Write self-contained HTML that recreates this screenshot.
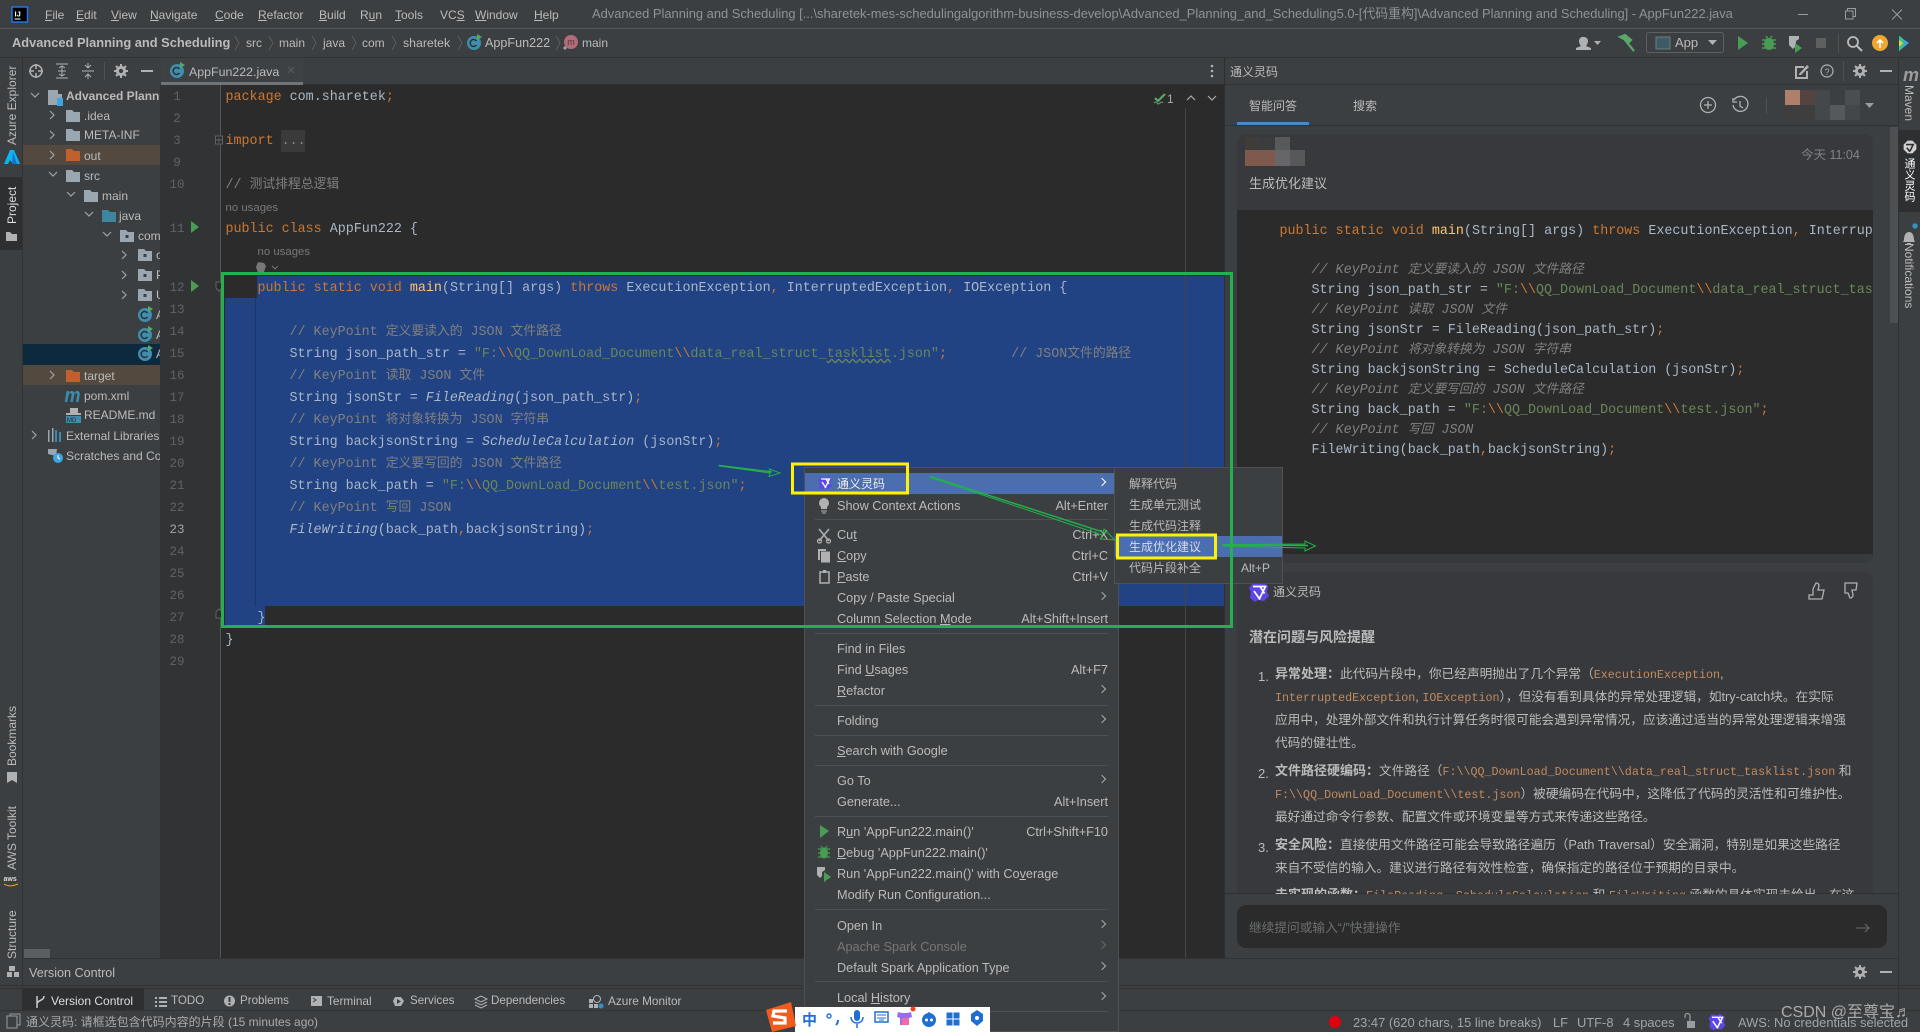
<!DOCTYPE html>
<html><head><meta charset="utf-8"><title>AppFun222.java</title>
<style>
html{background:#3c3f41}
html,body{margin:0;padding:0;width:1920px;height:1032px;overflow:hidden}
body{position:relative;background:#3c3f41;font-family:"Liberation Sans","Noto Sans CJK SC",sans-serif;font-size:12px;color:#bbb;filter:blur(.35px)}
.a{position:absolute}
.t{position:absolute;white-space:nowrap;line-height:20px;height:20px}
.c{position:absolute;white-space:pre;font-family:"Liberation Mono","Noto Sans CJK SC",monospace;font-size:13.36px;line-height:22px;height:22px;color:#a9b7c6}
.k{color:#cc7832}.g{color:#808080}.s{color:#6a8759}.m{color:#ffc66d}.i{font-style:italic}
.z{font-size:12.8px;font-family:"Noto Sans CJK SC",sans-serif;line-height:0}
.n{position:absolute;left:166px;width:22px;text-align:center;font-family:"Liberation Mono",monospace;font-size:12.5px;line-height:22px;color:#606366;height:22px}
.v{position:absolute;writing-mode:vertical-rl;transform:rotate(180deg);white-space:nowrap;font-size:12px;line-height:22px;width:22px;left:1px;text-align:center;color:#bbb}
.vr{position:absolute;writing-mode:vertical-rl;white-space:nowrap;font-size:12px;line-height:22px;width:22px;left:1898px;text-align:center;color:#bbb}
.r{position:absolute;left:805px;width:314px;height:21px;line-height:21px;color:#bbb;font-size:12.7px}
.r b{font-weight:normal;position:absolute;left:32px;top:.5px;white-space:nowrap}
.r i{font-style:normal;position:absolute;right:11px;top:.5px;white-space:nowrap}
.sp{position:absolute;left:815px;width:293px;height:1px;background:#515151}
.ar{position:absolute;right:14px;top:6px;width:5px;height:5px;border-top:1.4px solid #aaa;border-right:1.4px solid #aaa;transform:rotate(45deg)}
.sb{position:absolute;left:1114px;width:168px;height:21px;line-height:21px;color:#bbb;font-size:12px}
.sb b{font-weight:normal;position:absolute;left:15px;top:.5px;white-space:nowrap}
.p{position:absolute;left:1275px;white-space:nowrap;font-size:12.7px;line-height:23px;height:23px;color:#bbb}
.p u{text-decoration:none;font-family:"Liberation Mono",monospace;font-size:11.7px;line-height:0;color:#c38b5f}
.p b{font-weight:bold;font-size:13px;line-height:0}
.pn{position:absolute;left:1258px;font-size:13px;line-height:23px;color:#bbb}
.st{position:absolute;white-space:nowrap;line-height:21px;top:1012px;font-size:12.9px;color:#a0a5a8}
</style></head><body>

<!-- panels -->
<div class="a" style="left:0;top:28px;width:1920px;height:1px;background:#55585a"></div>
<div class="a" style="left:0;top:57px;width:1920px;height:1px;background:#323232"></div>
<div class="a" style="left:22px;top:58px;width:1px;height:930px;background:#323232"></div>
<div class="a" style="left:160px;top:58px;width:1064px;height:26px;background:#3c3f41"></div>
<div class="a" style="left:160px;top:84px;width:60px;height:874px;background:#313335"></div>
<div class="a" style="left:220px;top:84px;width:1004px;height:874px;background:#2b2b2b;border-left:1px solid #555;box-sizing:border-box"></div>
<div class="a" style="left:160px;top:84px;width:1064px;height:1px;background:#323232"></div>
<div class="a" style="left:161px;top:58px;width:142px;height:24px;background:#3e4144"></div>
<div class="a" style="left:161px;top:82px;width:142px;height:3px;background:#6e7478"></div>
<div class="a" style="left:1224px;top:58px;width:1px;height:900px;background:#2d2f30"></div>
<div class="a" style="left:1898px;top:58px;width:1px;height:953px;background:#323232"></div>
<div class="a" style="left:0;top:177px;width:22px;height:73px;background:#2d2f30"></div>
<div class="a" style="left:1899px;top:130px;width:21px;height:82px;background:#2d2f30"></div>

<!-- tree row highlights -->
<div class="a" style="left:23px;top:145px;width:137px;height:20px;background:#53493e"></div>
<div class="a" style="left:23px;top:344px;width:137px;height:21px;background:#0d293e"></div>
<div class="a" style="left:23px;top:365px;width:137px;height:20px;background:#53493e"></div>
<div class="a" style="left:24px;top:949px;width:26px;height:9px;background:#5c5f61"></div>

<!-- menu bar -->
<div class="t" style="left:45px;top:5px;color:#bbb"><u>F</u>ile</div>
<div class="t" style="left:76px;top:5px"><u>E</u>dit</div>
<div class="t" style="left:111px;top:5px"><u>V</u>iew</div>
<div class="t" style="left:150px;top:5px"><u>N</u>avigate</div>
<div class="t" style="left:215px;top:5px"><u>C</u>ode</div>
<div class="t" style="left:258px;top:5px"><u>R</u>efactor</div>
<div class="t" style="left:319px;top:5px"><u>B</u>uild</div>
<div class="t" style="left:360px;top:5px">R<u>u</u>n</div>
<div class="t" style="left:395px;top:5px"><u>T</u>ools</div>
<div class="t" style="left:440px;top:5px">VC<u>S</u></div>
<div class="t" style="left:475px;top:5px"><u>W</u>indow</div>
<div class="t" style="left:534px;top:5px"><u>H</u>elp</div>
<div class="t" style="left:592px;top:4px;color:#8f9396;font-size:12.9px;width:1145px;overflow:hidden">Advanced Planning and Scheduling [...\sharetek-mes-schedulingalgorithm-business-develop\Advanced_Planning_and_Scheduling5.0-[代码重构]\Advanced Planning and Scheduling] - AppFun222.java</div>

<!-- nav bar -->
<div class="t" style="left:12px;top:33px;font-weight:bold;font-size:12.85px">Advanced Planning and Scheduling</div>
<div class="t" style="left:246px;top:33px">src</div>
<div class="t" style="left:279px;top:33px">main</div>
<div class="t" style="left:323px;top:33px">java</div>
<div class="t" style="left:362px;top:33px">com</div>
<div class="t" style="left:403px;top:33px;font-size:12.3px">sharetek</div>
<div class="t" style="left:485px;top:33px;font-size:12.6px">AppFun222</div>
<div class="t" style="left:582px;top:33px">main</div>
<div class="a" style="left:1646px;top:32px;width:78px;height:21px;border:1px solid #5e6060;border-radius:3px;box-sizing:border-box"></div>
<div class="t" style="left:1675px;top:33px;font-size:13px">App</div>

<!-- tab -->
<div class="t" style="left:189px;top:62px;font-size:12.4px">AppFun222.java</div>

<!-- tree -->
<div class="a" style="left:23px;top:85px;width:137px;height:400px;overflow:hidden">
<div class="t" style="left:43px;top:1px;font-weight:bold">Advanced Planning</div>
<div class="t" style="left:61px;top:21px">.idea</div>
<div class="t" style="left:61px;top:40px">META-INF</div>
<div class="t" style="left:61px;top:61px">out</div>
<div class="t" style="left:61px;top:81px">src</div>
<div class="t" style="left:79px;top:101px">main</div>
<div class="t" style="left:96px;top:121px">java</div>
<div class="t" style="left:115px;top:141px">com</div>
<div class="t" style="left:133px;top:160px">c</div>
<div class="t" style="left:133px;top:180px">P</div>
<div class="t" style="left:133px;top:200px">U</div>
<div class="t" style="left:133px;top:220px">A</div>
<div class="t" style="left:133px;top:240px">A</div>
<div class="t" style="left:133px;top:259px">A</div>
<div class="t" style="left:61px;top:281px">target</div>
<div class="t" style="left:61px;top:301px">pom.xml</div>
<div class="t" style="left:61px;top:320px">README.md</div>
<div class="t" style="left:43px;top:341px">External Libraries</div>
<div class="t" style="left:43px;top:361px">Scratches and Consoles</div>
</div>

<!-- vertical strips -->
<div class="v" style="top:68px;height:77px">Azure Explorer</div>
<div class="v" style="top:186px;height:38px;color:#ddd">Project</div>
<div class="v" style="top:708px;height:58px">Bookmarks</div>
<div class="v" style="top:806px;height:64px">AWS Toolkit</div>
<div class="v" style="top:912px;height:47px">Structure</div>
<div class="vr" style="top:85px;height:37px">Maven</div>
<div class="vr" style="top:158px;height:44px;color:#fff;font-size:11px">通义灵码</div>
<div class="vr" style="top:241px;height:70px">Notifications</div>

<!-- line numbers -->
<div class="n" style="top:86px">1</div><div class="n" style="top:108px">2</div><div class="n" style="top:130px">3</div><div class="n" style="top:152px">9</div><div class="n" style="top:174px">10</div><div class="n" style="top:218px">11</div><div class="n" style="top:277px">12</div><div class="n" style="top:299px">13</div><div class="n" style="top:321px">14</div><div class="n" style="top:343px">15</div><div class="n" style="top:365px">16</div><div class="n" style="top:387px">17</div><div class="n" style="top:409px">18</div><div class="n" style="top:431px">19</div><div class="n" style="top:453px">20</div><div class="n" style="top:475px">21</div><div class="n" style="top:497px">22</div><div class="n" style="top:519px;color:#a4a3a3">23</div><div class="n" style="top:541px">24</div><div class="n" style="top:563px">25</div><div class="n" style="top:585px">26</div><div class="n" style="top:607px">27</div><div class="n" style="top:629px">28</div><div class="n" style="top:651px">29</div>

<!-- selection -->
<div class="a" style="left:257px;top:276px;width:967px;height:22px;background:#214283"></div>
<div class="a" style="left:225px;top:298px;width:999px;height:308px;background:#214283"></div>
<div class="a" style="left:225px;top:606px;width:40px;height:22px;background:#214283"></div>
<div class="a" style="left:255px;top:298px;width:1px;height:308px;background:#1a3566"></div>
<div class="a" style="left:1185px;top:84px;width:1px;height:874px;background:#444"></div>
<div class="a" style="left:1185px;top:84px;width:1px;height:24px;background:#2b2b2b"></div>

<!-- code -->
<div class="c" style="left:225.5px;top:87px"><span class="k">package</span> com.sharetek<span class="k">;</span></div>
<div class="a" style="left:281px;top:130px;width:24px;height:22px;background:#3a3a3a"></div>
<div class="c" style="left:225.5px;top:131px"><span class="k">import</span> <span style="color:#888">...</span></div>
<div class="c g" style="left:225.5px;top:175px;color:#808080">// <span class="z">测试排程总逻辑</span></div>
<div class="t" style="left:225.5px;top:198px;color:#787878;font-size:11.4px">no usages</div>
<div class="c" style="left:225.5px;top:219px"><span class="k">public class</span> AppFun222 {</div>
<div class="t" style="left:257.5px;top:242px;color:#787878;font-size:11.4px">no usages</div>
<div class="c" style="left:257.5px;top:278px"><span class="k">public static void</span> <span class="m">main</span>(String[] args) <span class="k">throws</span> ExecutionException<span class="k">,</span> InterruptedException<span class="k">,</span> IOException {</div>
<div class="c g" style="left:289.5px;top:322px;color:#808080">// KeyPoint <span class="z">定义要读入的</span> JSON <span class="z">文件路径</span></div>
<div class="c" style="left:289.5px;top:344px">String json_path_str = <span class="s">"F:</span><span class="k">\\</span><span class="s">QQ_DownLoad_Document</span><span class="k">\\</span><span class="s">data_real_struct_<span style="text-decoration:underline wavy #6a8759">tasklist</span>.json"</span><span class="k">;</span>        <span style="color:#808080">// JSON<span class="z">文件的路径</span></span></div>
<div class="c" style="left:289.5px;top:366px;color:#808080">// KeyPoint <span class="z">读取</span> JSON <span class="z">文件</span></div>
<div class="c" style="left:289.5px;top:388px">String jsonStr = <span class="i">FileReading</span>(json_path_str)<span class="k">;</span></div>
<div class="c" style="left:289.5px;top:410px;color:#808080">// KeyPoint <span class="z">将对象转换为</span> JSON <span class="z">字符串</span></div>
<div class="c" style="left:289.5px;top:432px">String backjsonString = <span class="i">ScheduleCalculation</span> (jsonStr)<span class="k">;</span></div>
<div class="c" style="left:289.5px;top:454px;color:#808080">// KeyPoint <span class="z">定义要写回的</span> JSON <span class="z">文件路径</span></div>
<div class="c" style="left:289.5px;top:476px">String back_path = <span class="s">"F:</span><span class="k">\\</span><span class="s">QQ_DownLoad_Document</span><span class="k">\\</span><span class="s">test.json"</span><span class="k">;</span></div>
<div class="c" style="left:289.5px;top:498px;color:#808080">// KeyPoint <span class="z">写回</span> JSON</div>
<div class="c" style="left:289.5px;top:520px"><span class="i">FileWriting</span>(back_path<span class="k">,</span>backjsonString)<span class="k">;</span></div>
<div class="c" style="left:257.5px;top:608px">}</div>
<div class="c" style="left:225.5px;top:630px">}</div>

<!-- right panel -->
<div class="t" style="left:1230px;top:62px">通义灵码</div>
<div class="a" style="left:1225px;top:84px;width:673px;height:1px;background:#323232"></div>
<div class="t" style="left:1249px;top:96px">智能问答</div>
<div class="t" style="left:1353px;top:96px">搜索</div>
<div class="a" style="left:1237px;top:122px;width:72px;height:3px;background:#4a88c7"></div>
<div class="a" style="left:1225px;top:125px;width:673px;height:1px;background:#323232"></div>
<div class="a" style="left:1237px;top:134px;width:636px;height:429px;background:#37393c;border-radius:9px"></div>
<div class="a" style="left:1237px;top:210px;width:636px;height:344px;background:#2b2b2b"></div>
<div class="a" style="left:1237px;top:572px;width:636px;height:321px;background:#37393c;border-radius:9px 9px 0 0"></div>
<div class="a" style="left:1890px;top:127px;width:8px;height:196px;background:#4c5052"></div>
<div class="a" style="left:1225px;top:893px;width:673px;height:1px;background:#2d2f30"></div>
<div class="a" style="left:1237px;top:905px;width:650px;height:43px;background:#2b2b2b;border-radius:9px"></div>
<div class="t" style="left:1801px;top:145px;color:#808386;font-size:12.5px">今天 11:04</div>
<div class="t" style="left:1249px;top:174px;font-size:13px">生成优化建议</div>

<!-- pixel blocks -->
<div class="a" style="left:1245px;top:137px;width:15px;height:13px;background:#413c3c"></div>
<div class="a" style="left:1260px;top:137px;width:15px;height:13px;background:#3a3c3e"></div>
<div class="a" style="left:1275px;top:137px;width:15px;height:13px;background:#58595b"></div>
<div class="a" style="left:1245px;top:150px;width:15px;height:16px;background:#80594c"></div>
<div class="a" style="left:1260px;top:150px;width:15px;height:16px;background:#7d5a4d"></div>
<div class="a" style="left:1275px;top:150px;width:15px;height:16px;background:#66666a"></div>
<div class="a" style="left:1290px;top:150px;width:15px;height:16px;background:#57585a"></div>
<div class="a" style="left:1785px;top:90px;width:15px;height:15px;background:#b07f6c"></div>
<div class="a" style="left:1800px;top:90px;width:15px;height:15px;background:#544440"></div>
<div class="a" style="left:1815px;top:90px;width:15px;height:15px;background:#45484a"></div>
<div class="a" style="left:1845px;top:90px;width:15px;height:15px;background:#4b4e50"></div>
<div class="a" style="left:1785px;top:105px;width:30px;height:15px;background:#3f3e3f"></div>
<div class="a" style="left:1815px;top:105px;width:15px;height:15px;background:#45484a"></div>
<div class="a" style="left:1830px;top:105px;width:15px;height:15px;background:#55595b"></div>
<div class="a" style="left:1845px;top:105px;width:15px;height:15px;background:#444749"></div>

<!-- right code -->
<div class="a" style="left:1237px;top:210px;width:636px;height:344px;overflow:hidden">
<div class="c" style="left:42.5px;top:10.5px"><span class="k">public static void</span> <span class="m">main</span>(String[] args) <span class="k">throws</span> ExecutionException<span class="k">,</span> InterruptedException, IOException {</div>
<div class="c i" style="left:74.5px;top:50px;color:#808080">// KeyPoint <span class="z">定义要读入的</span> JSON <span class="z">文件路径</span></div>
<div class="c" style="left:74.5px;top:70px">String json_path_str = <span class="s">"F:</span><span class="k">\\</span><span class="s">QQ_DownLoad_Document</span><span class="k">\\</span><span class="s">data_real_struct_tasklist.json"</span></div>
<div class="c i" style="left:74.5px;top:90px;color:#808080">// KeyPoint <span class="z">读取</span> JSON <span class="z">文件</span></div>
<div class="c" style="left:74.5px;top:110px">String jsonStr = FileReading(json_path_str)<span class="k">;</span></div>
<div class="c i" style="left:74.5px;top:130px;color:#808080">// KeyPoint <span class="z">将对象转换为</span> JSON <span class="z">字符串</span></div>
<div class="c" style="left:74.5px;top:150px">String backjsonString = ScheduleCalculation (jsonStr)<span class="k">;</span></div>
<div class="c i" style="left:74.5px;top:170px;color:#808080">// KeyPoint <span class="z">定义要写回的</span> JSON <span class="z">文件路径</span></div>
<div class="c" style="left:74.5px;top:190px">String back_path = <span class="s">"F:</span><span class="k">\\</span><span class="s">QQ_DownLoad_Document</span><span class="k">\\</span><span class="s">test.json"</span><span class="k">;</span></div>
<div class="c i" style="left:74.5px;top:210px;color:#808080">// KeyPoint <span class="z">写回</span> JSON</div>
<div class="c" style="left:74.5px;top:230px">FileWriting(back_path<span class="k">,</span>backjsonString)<span class="k">;</span></div>
</div>

<!-- answer -->
<div class="t" style="left:1273px;top:582px">通义灵码</div>
<div class="t" style="left:1249px;top:627px;font-weight:bold;font-size:14px">潜在问题与风险提醒</div>
<div class="pn" style="top:665px">1.</div>
<div class="p" style="top:663px"><b>异常处理：</b>此代码片段中，你已经声明抛出了几个异常（<u>ExecutionException</u>,</div>
<div class="p" style="top:686px"><u>InterruptedException</u>, <u>IOException</u>），但没有看到具体的异常处理逻辑，如try-catch块。在实际</div>
<div class="p" style="top:709px">应用中，处理外部文件和执行计算任务时很可能会遇到异常情况，应该通过适当的异常处理逻辑来增强</div>
<div class="p" style="top:732px">代码的健壮性。</div>
<div class="pn" style="top:762px">2.</div>
<div class="p" style="top:760px"><b>文件路径硬编码：</b>文件路径（<u>F:\\QQ_DownLoad_Document\\data_real_struct_tasklist.json</u> 和</div>
<div class="p" style="top:783px"><u>F:\\QQ_DownLoad_Document\\test.json</u>）被硬编码在代码中，这降低了代码的灵活性和可维护性。</div>
<div class="p" style="top:806px">最好通过命令行参数、配置文件或环境变量等方式来传递这些路径。</div>
<div class="pn" style="top:836px">3.</div>
<div class="p" style="top:834px"><b>安全风险：</b>直接使用文件路径可能会导致路径遍历（Path Traversal）安全漏洞，特别是如果这些路径</div>
<div class="p" style="top:857px">来自不受信的输入。建议进行路径有效性检查，确保指定的路径位于预期的目录中。</div>
<div class="a" style="left:1237px;top:884px;width:636px;height:10px;overflow:hidden"><div class="p" style="left:38px;top:0"><b>未实现的函数：</b><u>FileReading</u>、<u>ScheduleCalculation</u> 和 <u>FileWriting</u> 函数的具体实现未给出，在这</div></div>
<div class="t" style="left:1249px;top:918px;color:#6b6e70;font-size:12.7px">继续提问或输入“/”快捷操作</div>

<!-- bottom -->
<div class="a" style="left:23px;top:958px;width:1875px;height:1px;background:#323232"></div>
<div class="a" style="left:0;top:985px;width:1920px;height:1px;background:#323232"></div>
<div class="a" style="left:0;top:988px;width:1920px;height:1px;background:#323232"></div>
<div class="a" style="left:0;top:1010px;width:1920px;height:1px;background:#323232"></div>
<div class="a" style="left:22px;top:989px;width:122px;height:21px;background:#2d2f30"></div>
<div class="t" style="left:29px;top:963px;font-size:12.6px">Version Control</div>
<div class="t" style="left:51px;top:991px;color:#ddd">Version Control</div>
<div class="t" style="left:171px;top:991px;font-size:11.6px">TODO</div>
<div class="t" style="left:240px;top:991px;font-size:11.6px">Problems</div>
<div class="t" style="left:327px;top:991px;font-size:11.8px">Terminal</div>
<div class="t" style="left:410px;top:991px;font-size:11.6px">Services</div>
<div class="t" style="left:491px;top:991px;font-size:11.6px">Dependencies</div>
<div class="t" style="left:608px;top:991px;font-size:11.8px">Azure Monitor</div>
<div class="st" style="left:26px;color:#aaa;font-size:12px">通义灵码: 请框选包含代码内容的片段 (15 minutes ago)</div>
<div class="st" style="left:1353px">23:47 (620 chars, 15 line breaks)</div>
<div class="st" style="left:1553px">LF</div>
<div class="st" style="left:1577px">UTF-8</div>
<div class="st" style="left:1623px">4 spaces</div>
<div class="st" style="left:1738px">AWS: No credentials selected</div>

<!-- base icons -->
<svg class="a" style="left:0;top:0" width="1920" height="1032" viewBox="0 0 1920 1032" fill="none">
<defs>
<g id="fo"><path d="M0 0h6l2 2h6v10H0z" fill="#9aa7b0"/></g>
<g id="fd"><path d="M0 0h6l2 2h6v10H0z" fill="#9aa7b0"/><rect x="5.5" y="5" width="3" height="3" fill="#3c3f41"/></g>
<g id="cl"><circle cx="7" cy="7" r="7" fill="#3f8eb0"/><path d="M9.5 5A3.5 3.5 0 1 0 9.5 9" stroke="#2b2b2b" stroke-width="1.400"/><path d="M10 -2l5 3-5 3z" fill="#59a869"/></g>
<g id="chr"><path d="M0 0l4 4-4 4" stroke="#a0a4a8" stroke-width="1.200"/></g>
<g id="chd"><path d="M0 0l4 4 4-4" stroke="#a0a4a8" stroke-width="1.200"/></g>
<g id="gear"><circle cx="0" cy="0" r="3.6" stroke="#afb1b3" stroke-width="3"/><path d="M0-7v3M0 4v3M-7 0h3M4 0h3M-5-5l2 2M3 3l2 2M-5 5l2-2M3-3l2-2" stroke="#afb1b3" stroke-width="2"/><circle r="1.700" fill="#3c3f41"/></g>
<g id="ty"><path d="M-6-9L1-8L3-10L9-6L8 0L10 4L5 9L-1 8L-4 10L-9 6L-8 0L-10-4z" fill="#5b46e6"/><path d="M-6-5.500H6.500L0 7.500M-5-1L1 7.500M1-5.500L5.500 1.500" stroke="#fff" stroke-width="1.700"/></g>
</defs>
<!-- IJ logo -->
<rect x="12" y="7" width="15.500" height="15" fill="#000" stroke="#1c7cf0" stroke-width="1.400"/>
<text x="14.500" y="16.500" fill="#fff" font-family="Liberation Sans" font-size="7.500" font-weight="bold">IJ</text><rect x="14.500" y="18.500" width="6" height="1" fill="#fff"/>
<!-- window buttons -->
<path d="M1798 14.500h10" stroke="#9a9c9e"/><path d="M1845.500 11h7.500v8h-7.500zM1847.500 11v-2.500h8v8H1853" stroke="#9a9c9e"/><path d="M1892 9.500l10 10m0-10l-10 10" stroke="#9a9c9e"/>
<!-- nav chevrons -->
<g stroke="#5a5d5f" fill="none"><path d="M235 36l4 7-4 7M269 36l4 7-4 7M312 36l4 7-4 7M352 36l4 7-4 7M392 36l4 7-4 7M458 36l4 7-4 7M556 36l4 7-4 7"/></g>
<use href="#cl" x="467" y="36"/>
<circle cx="571" cy="42" r="7" fill="#b56a78"/><text x="567.200" y="45" font-size="9" fill="#3c3f41" font-family="Liberation Sans">m</text><path d="M565 46l2 2-2 2-2-2z" fill="#9aa7b0"/>
<!-- right toolbar -->
<path d="M1584 37a4 4 0 0 1 4 4c0 2-1 4-2 5l5 2v2h-15v-2l5-2c-1-1-2-3-2-5a4 4 0 0 1 5-4z" fill="#afb1b3"/><path d="M1594 41h7l-3.500 4z" fill="#afb1b3"/>
<path d="M1620 37l5-2 6 5-3 3-1-1-3-3zM1625 40l9 11" stroke="#59a869" stroke-width="2.200" fill="#59a869"/>
<rect x="1656" y="37" width="14" height="12" fill="#3e5a64" stroke="#6e7b80"/>
<path d="M1708 40h9l-4.500 5z" fill="#afb1b3"/>
<path d="M1738 36l10 7-10 7z" fill="#499c54"/>
<ellipse cx="1769" cy="44" rx="5" ry="6" fill="#499c54"/><path d="M1762 40h14M1762 44h14M1762 48h14M1766 36l2 3M1772 36l-2 3" stroke="#499c54" stroke-width="1.500"/>
<path d="M1789 36h10v3l-3 2v5l-3 3-4-4z" fill="#afb1b3"/><path d="M1795 43l7 5-7 5z" fill="#499c54"/>
<rect x="1816" y="38" width="10" height="10" fill="#5e6060"/>
<rect x="1838" y="33" width="1" height="20" fill="#515151"/>
<circle cx="1853" cy="42" r="5" stroke="#bbb" stroke-width="1.800"/><path d="M1857 46l5 5" stroke="#bbb" stroke-width="2"/>
<circle cx="1880" cy="43" r="8" fill="#f0a732"/><path d="M1880 48v-8m-3 3l3-3 3 3" stroke="#fff" stroke-width="1.600"/>
<path d="M1899 36l10 7-10 8z" fill="#3ba3e0"/><path d="M1899 36c6 2 7 10 0 15z" fill="#35c48b"/><path d="M1899 40l4 3-4 4z" fill="#e6d23c"/>
<!-- tree toolbar -->
<circle cx="36" cy="71" r="6" stroke="#afb1b3" stroke-width="1.500"/><path d="M36 64v5M36 73v5M29 71h5M38 71h5" stroke="#afb1b3" stroke-width="1.500"/>
<path d="M56 64h12M56 78h12M62 66v10M59 68l3-2 3 2M59 74l3 2 3-2M58 71h8" stroke="#afb1b3"/>
<path d="M82 71h12M88 63v5M88 74v5M85 65l3 3 3-3M85 77l3-3 3 3" stroke="#afb1b3"/>
<rect x="104" y="62" width="1" height="18" fill="#515151"/>
<use href="#gear" x="121" y="71"/><rect x="141" y="70" width="12" height="2" fill="#afb1b3"/>
<!-- tab icons -->
<use href="#cl" x="170" y="64"/><path d="M288 67l6 6m0-6l-6 6" stroke="#5a5d5f"/>
<circle cx="1212" cy="66" r="1.300" fill="#afb1b3"/><circle cx="1212" cy="71" r="1.300" fill="#afb1b3"/><circle cx="1212" cy="76" r="1.300" fill="#afb1b3"/>
<!-- tree icons -->
<g><path d="M48 90h10v4h4v11H48z" fill="#9aa7b0"/><rect x="57" y="98" width="6" height="8" fill="#3fa5e0"/></g>
<use href="#chd" x="31" y="93"/>
<use href="#chr" x="50" y="111"/><use href="#fo" x="66" y="110"/>
<use href="#chr" x="50" y="131"/><use href="#fo" x="66" y="129"/>
<use href="#chr" x="50" y="151"/><path d="M66 149h6l2 2h6v10H66z" fill="#c0602f"/>
<use href="#chd" x="49" y="172"/><use href="#fo" x="66" y="170"/>
<use href="#chd" x="67" y="192"/><use href="#fo" x="84" y="190"/>
<use href="#chd" x="85" y="212"/><path d="M102 210h6l2 2h6v10h-14z" fill="#3e86a0"/>
<use href="#chd" x="103" y="232"/><use href="#fd" x="120" y="230"/>
<use href="#chr" x="122" y="251"/><use href="#fd" x="138" y="249"/>
<use href="#chr" x="122" y="271"/><use href="#fd" x="138" y="269"/>
<use href="#chr" x="122" y="291"/><use href="#fd" x="138" y="289"/>
<use href="#cl" x="138" y="308"/><use href="#cl" x="138" y="328"/><use href="#cl" x="138" y="347"/>
<use href="#chr" x="50" y="371"/><path d="M66 370h6l2 2h6v10H66z" fill="#c0602f"/>
<text x="64.500" y="402" font-size="20" font-weight="bold" font-style="italic" font-family="Liberation Sans" fill="#3d8cb0" textLength="16" lengthAdjust="spacingAndGlyphs">m</text>
<path d="M70 408h8v5h3v2H66v-2h4z" fill="#afb1b3"/><rect x="66" y="416" width="15" height="7" fill="#3d8cb0"/><text x="67" y="422" font-size="6" font-family="Liberation Sans" fill="#2b2b2b">MD</text>
<use href="#chr" x="32" y="431"/><path d="M48 430h1.500v12H48zM52 428h1.500v14H52z" fill="#9aa7b0"/><path d="M55 430h2v12h-2zM59 432h2v10h-2z" fill="#3d8cb0"/>
<path d="M48 449h9l-1 7-8-2z" fill="#9aa7b0"/><circle cx="58" cy="458" r="5" fill="#3fa5e0"/><path d="M58 455v3l2 1" stroke="#fff"/>
<!-- strip icons -->
<path d="M4 164l6-14h4l6 14h-7l-3-4-2 4z" fill="#0db3f0"/><path d="M13 152l4 12h-5z" fill="#1572c8"/>
<path d="M6 232h4l2 2h5v7H6z" fill="#afb1b3"/>
<path d="M7 772h10v11l-5-3-5 3z" fill="#afb1b3"/>
<text x="3.500" y="881" font-size="7" font-family="Liberation Sans" font-weight="bold" fill="#ddd">aws</text><path d="M4 884c5 3 9 2 14 0" stroke="#f0a020"/>
<path d="M9 966h6v5H9zM7 972h5v5H7zM14 972h5v5h-5z" fill="#afb1b3"/>
<text x="1903" y="81" font-size="18" font-style="italic" font-weight="bold" font-family="Liberation Sans" fill="#9a9c9e">m</text>
<g transform="translate(1910,147) scale(.8)"><path d="M-3-8L3-8L8-3L8 3L3 8L-3 8L-8 3L-8-3z" fill="#d0d0d0"/><path d="M-5-3h9L0 5M-4 1l4 5" stroke="#2d2f30" stroke-width="2"/></g>
<path d="M1904 240c0-5 2-8 5-8s5 3 5 8l1 2h-12zM1907 243h4v2h-4z" fill="#afb1b3"/><circle cx="1915" cy="226" r="2.700" fill="#3592c4"/>
<!-- right panel header icons -->
<path d="M1795 66h9v2h-7v9h9v-6h2v8h-13z" fill="#afb1b3"/><path d="M1799 74l8-9 2 2-8 8h-2z" fill="#afb1b3"/>
<circle cx="1827" cy="71" r="6" stroke="#afb1b3" stroke-width="1.200"/><text x="1824.500" y="75" font-size="9" fill="#afb1b3" font-family="Liberation Sans">?</text>
<rect x="1843" y="61" width="1" height="20" fill="#515151"/>
<use href="#gear" x="1860" y="71"/><rect x="1880" y="70" width="12" height="2" fill="#afb1b3"/>
<circle cx="1708" cy="105" r="7.500" stroke="#afb1b3" stroke-width="1.300"/><path d="M1704 105h8M1708 101v8" stroke="#afb1b3" stroke-width="1.300"/>
<path d="M1734 100a7.500 7.500 0 1 1-1 5M1740 101v5l3 2M1733 98v4h4" stroke="#afb1b3" stroke-width="1.300"/>
<rect x="1766" y="97" width="1" height="17" fill="#515151"/>
<path d="M1865 103h9l-4.500 5z" fill="#9a9c9e"/>
<!-- gutter -->
<path d="M191 221l8 6-8 6zM191 280l8 6-8 6z" fill="#499c54"/>
<rect x="215.500" y="136" width="7" height="8" stroke="#606366" fill="#2b2b2b"/><path d="M216 140h6M219 138v5" stroke="#606366"/>
<path d="M216 282h6v6l-3 3-3-3z" fill="#2b2b2b" stroke="#606366"/><path d="M216 612l3-3 3 3v6h-6z" fill="#2b2b2b" stroke="#606366"/>
<path d="M258 262l6 1 2 3-2 6-6 1-2-6z" fill="#777"/><path d="M272 266l3 3 3-3" stroke="#777"/>
<!-- inspections -->
<path d="M1155 98l3 3 7-7" stroke="#59a869" stroke-width="2.200"/><path d="M1154 103q2-2 3 0t3 0 3 0" stroke="#59a869"/>
<text x="1167" y="103" font-size="12" fill="#aaa" font-family="Liberation Sans">1</text>
<path d="M1187 100l4-4 4 4M1208 96l4 4 4-4" stroke="#aaa" stroke-width="1.200"/>
<!-- answer icons -->
<use href="#ty" x="1259" y="592"/>
<path d="M1809 595h4v-6l3-6c2 0 3 1 3 3l-1 4h6l-2 9h-13z" stroke="#afb1b3" stroke-width="1.300"/>
<path d="M1845 583h12l-1 7h-4l1 5c0 2-1 3-3 3l-2-5h-3z" stroke="#afb1b3" stroke-width="1.300"/>
<path d="M1856 928h13m-4-4l4 4-4 4" stroke="#5e6060" stroke-width="1.300"/>
<!-- bottom icons -->
<use href="#gear" x="1860" y="972"/><rect x="1880" y="971" width="12" height="2" fill="#afb1b3"/>
<path d="M37 996v12M44 996c0 5-7 4-7 8" stroke="#ccc" stroke-width="1.500"/>
<path d="M155 997h2v2h-2zM155 1001h2v2h-2zM155 1005h2v2h-2zM159 997h8v2h-8zM159 1001h8v2h-8zM159 1005h8v2h-8z" fill="#afb1b3"/>
<circle cx="229.500" cy="1001" r="5.500" fill="#afb1b3"/><rect x="228.500" y="997" width="2" height="5" fill="#3c3f41"/><rect x="228.500" y="1003" width="2" height="2" fill="#3c3f41"/>
<rect x="311" y="996" width="11" height="10" fill="#afb1b3"/><path d="M313 998l3 2-3 2" stroke="#3c3f41"/>
<path d="M395 997h6l3 4-3 5h-6l-2-5z" fill="#afb1b3"/><path d="M397 999l4 2.500-4 2.500z" fill="#3c3f41"/>
<path d="M475 999l6-3 6 3-6 3zM475 1002l6 3 6-3M475 1005l6 3 6-3" stroke="#afb1b3"/>
<path d="M589 999h4v4h-4zM589 1004h4v4h-4zM594 1004h4v4h-4z" fill="#afb1b3"/><circle cx="597" cy="999" r="3.500" stroke="#afb1b3"/><circle cx="601" cy="1006" r="2.500" fill="#3592c4"/>
<path d="M7 1016h10v12H7zM10 1016v-2h10v11h-3" stroke="#9a9c9e"/>
<circle cx="1335" cy="1022" r="6" fill="#e00010"/>
<rect x="1687" y="1021" width="8" height="7" fill="#9a9c9e"/><path d="M1685 1018v-2a2.500 2.500 0 0 1 5 0v5" stroke="#9a9c9e" stroke-width="1.200"/>
<use href="#ty" transform="translate(1717 1022) scale(.85)"/>
</svg>

<!-- context menu -->
<div class="a" style="left:804px;top:467px;width:315px;height:565px;background:#3c3f41;border:1px solid #515151;box-sizing:border-box"></div>
<div class="a" style="left:805px;top:473px;width:313px;height:21px;background:#4b6eaf"></div>
<div class="r" style="top:473px;color:#eee"><b style="font-size:12px">通义灵码</b><span class="ar" style="border-color:#fff"></span></div>
<div class="r" style="top:495px"><b>Show Context Actions</b><i>Alt+Enter</i></div>
<div class="sp" style="top:519px"></div>
<div class="r" style="top:524px"><b>Cu<u>t</u></b><i>Ctrl+X</i></div>
<div class="r" style="top:545px"><b><u>C</u>opy</b><i>Ctrl+C</i></div>
<div class="r" style="top:566px"><b><u>P</u>aste</b><i>Ctrl+V</i></div>
<div class="r" style="top:587px"><b>Copy / Paste Special</b><span class="ar"></span></div>
<div class="r" style="top:608px"><b>Column Selection <u>M</u>ode</b><i>Alt+Shift+Insert</i></div>
<div class="sp" style="top:633px"></div>
<div class="r" style="top:638px"><b>Find in Files</b></div>
<div class="r" style="top:659px"><b>Find <u>U</u>sages</b><i>Alt+F7</i></div>
<div class="r" style="top:680px"><b><u>R</u>efactor</b><span class="ar"></span></div>
<div class="sp" style="top:705px"></div>
<div class="r" style="top:710px"><b>Folding</b><span class="ar"></span></div>
<div class="sp" style="top:735px"></div>
<div class="r" style="top:740px"><b><u>S</u>earch with Google</b></div>
<div class="sp" style="top:765px"></div>
<div class="r" style="top:770px"><b>Go To</b><span class="ar"></span></div>
<div class="r" style="top:791px"><b>Generate...</b><i>Alt+Insert</i></div>
<div class="sp" style="top:816px"></div>
<div class="r" style="top:821px"><b>R<u>u</u>n 'AppFun222.main()'</b><i>Ctrl+Shift+F10</i></div>
<div class="r" style="top:842px"><b><u>D</u>ebug 'AppFun222.main()'</b></div>
<div class="r" style="top:863px"><b>Run 'AppFun222.main()' with Co<u>v</u>erage</b></div>
<div class="r" style="top:884px"><b>Modify Run Configuration...</b></div>
<div class="sp" style="top:909px"></div>
<div class="r" style="top:915px"><b>Open In</b><span class="ar"></span></div>
<div class="r" style="top:936px;color:#777"><b>Apache Spark Console</b><span class="ar" style="border-color:#666"></span></div>
<div class="r" style="top:957px"><b>Default Spark Application Type</b><span class="ar"></span></div>
<div class="sp" style="top:981px"></div>
<div class="r" style="top:987px"><b>Local <u>H</u>istory</b><span class="ar"></span></div>
<div class="sp" style="top:1011px"></div>

<!-- submenu -->
<div class="a" style="left:1114px;top:467px;width:169px;height:117px;background:#3c3f41;border:1px solid #515151;box-sizing:border-box"></div>
<div class="a" style="left:1115px;top:536px;width:167px;height:21px;background:#4b6eaf"></div>
<div class="sb" style="top:473px"><b>解释代码</b></div>
<div class="sb" style="top:494px"><b>生成单元测试</b></div>
<div class="sb" style="top:515px"><b>生成代码注释</b></div>
<div class="sb" style="top:536px;color:#d5dcea"><b>生成优化建议</b></div>
<div class="sb" style="top:557px"><b>代码片段补全</b><b style="left:127px">Alt+P</b></div>

<!-- menu icons -->
<svg class="a" style="left:0;top:0" width="1920" height="1032" viewBox="0 0 1920 1032" fill="none">
<defs><g id="ty2"><path d="M-4-6L1-5L3-7L6-4L5 0L7 3L3 6L-1 5L-3 7L-6 4L-5 0L-7-3z" fill="#5b46e6"/><path d="M-4-4H4.500L0 5M-3-1L1 5M1-4L4 1" stroke="#fff" stroke-width="1.300"/></g></defs>
<use href="#ty2" x="825" y="483"/>
<path d="M824 498a5 5 0 0 1 5 5c0 2-1 3-2 4v2h-6v-2c-1-1-2-2-2-4a5 5 0 0 1 5-5z" fill="#afb1b3"/><path d="M821 511h6M822 513h4" stroke="#afb1b3"/>
<path d="M819 529l10 12M829 529l-10 12" stroke="#afb1b3" stroke-width="1.500"/><circle cx="819.500" cy="541" r="2" stroke="#afb1b3" stroke-width="1.200"/><circle cx="828.500" cy="541" r="2" stroke="#afb1b3" stroke-width="1.200"/>
<path d="M818 549h8v2h-6v9h-2z" fill="#afb1b3"/><rect x="821.500" y="552" width="8" height="10" stroke="#afb1b3" fill="#afb1b3"/>
<rect x="820" y="572" width="9" height="11" stroke="#afb1b3" stroke-width="1.500"/><rect x="823" y="570" width="3" height="3" fill="#afb1b3"/>
<path d="M820 825l9 6-9 7z" fill="#499c54"/>
<ellipse cx="824" cy="853" rx="4" ry="5.500" fill="#499c54"/><path d="M818 849h12M818 853h12M818 857h12M821 846l2 3M827 846l-2 3" stroke="#499c54" stroke-width="1.200"/>
<path d="M817 867h8v3l-3 2v4l-2 2-3-3z" fill="#afb1b3"/><path d="M824 872l7 5-7 5z" fill="#499c54"/>
</svg>

<!-- IME bar -->
<div class="a" style="left:795px;top:1007px;width:195px;height:25px;background:#fff"></div>
<svg class="a" style="left:0;top:0" width="1920" height="1032" viewBox="0 0 1920 1032" fill="none">
<path d="M766 1010l25-8 5 24-24 6z" fill="#f25a1e"/>
<path d="M787 1011h-13l-1 5 12 2 0 5h-12" stroke="#fff" stroke-width="3.200"/>
<text x="802" y="1025" font-size="15" font-weight="bold" fill="#1f6ed4" font-family="Noto Sans CJK SC">中</text>
<circle cx="829" cy="1016" r="2" stroke="#1f6ed4" stroke-width="1.400"/><path d="M838 1020c0 3-1 4-2 5" stroke="#1f6ed4" stroke-width="2"/>
<rect x="854" y="1010" width="6" height="11" rx="3" fill="#1f6ed4"/><path d="M851 1017c0 8 12 8 12 0M857 1024v4" stroke="#1f6ed4" stroke-width="1.500"/>
<rect x="875" y="1012" width="13" height="10" stroke="#1f6ed4" stroke-width="1.500"/><path d="M877 1015h9M877 1018h9M879 1020h5" stroke="#1f6ed4"/>
<path d="M898 1012l4 1h5l4-1 1 5-3 1v7h-9v-7l-3-1z" fill="#9a6cf0"/><path d="M902 1018h7v7h-7z" fill="#f06ca0"/>
<circle cx="913" cy="1009" r="2.500" fill="#f04020"/>
<circle cx="929" cy="1020" r="7" fill="#1f6ed4"/><circle cx="926.500" cy="1020" r="1.500" fill="#fff"/><circle cx="931.500" cy="1020" r="1.500" fill="#fff"/><path d="M929 1012v2" stroke="#1f6ed4" stroke-width="1.500"/>
<path d="M947 1013h5v5h-5zM954 1013h5v5h-5zM947 1020h5v5h-5zM954 1020h5v5h-5z" fill="#1f6ed4" stroke="#1f6ed4"/>
<path d="M977 1010l6 4v7l-6 5-6-5v-7z" fill="#1f6ed4"/><circle cx="977" cy="1018" r="2" fill="#fff"/>
</svg>

<!-- annotations -->
<svg class="a" style="left:0;top:0" width="1920" height="1032" viewBox="0 0 1920 1032" fill="none">
<rect x="222.500" y="273.500" width="1009" height="353" stroke="#22b14c" stroke-width="3"/>
<rect x="792.500" y="464" width="115" height="29" stroke="#fff200" stroke-width="3"/>
<rect x="1117.500" y="535" width="98" height="23" stroke="#fff200" stroke-width="3"/>
<g stroke="#22b14c" stroke-width="1" fill="none">
<path d="M719 465.500L770 471.500L769.500 469L780 473L769 476.500L770 473L719 466z"/>
<path d="M930.500 476.500L1103 532L1104 529L1115 540L1101 539L1102 535L930.500 477.500z"/>
<path d="M1223 544.500L1305 544L1305 541L1315.500 546L1305 551L1305 548L1223 546z"/>
</g>
<path d="M719 465.500L772 472M930.500 476.500L1106 533M1223 545L1308 545.500" stroke="#22b14c" stroke-width="1.400"/>
</svg>

<div class="t" style="left:1781px;top:1003px;font-size:16px;color:rgba(235,235,235,.62)">CSDN @至尊宝♬</div>
</body></html>
